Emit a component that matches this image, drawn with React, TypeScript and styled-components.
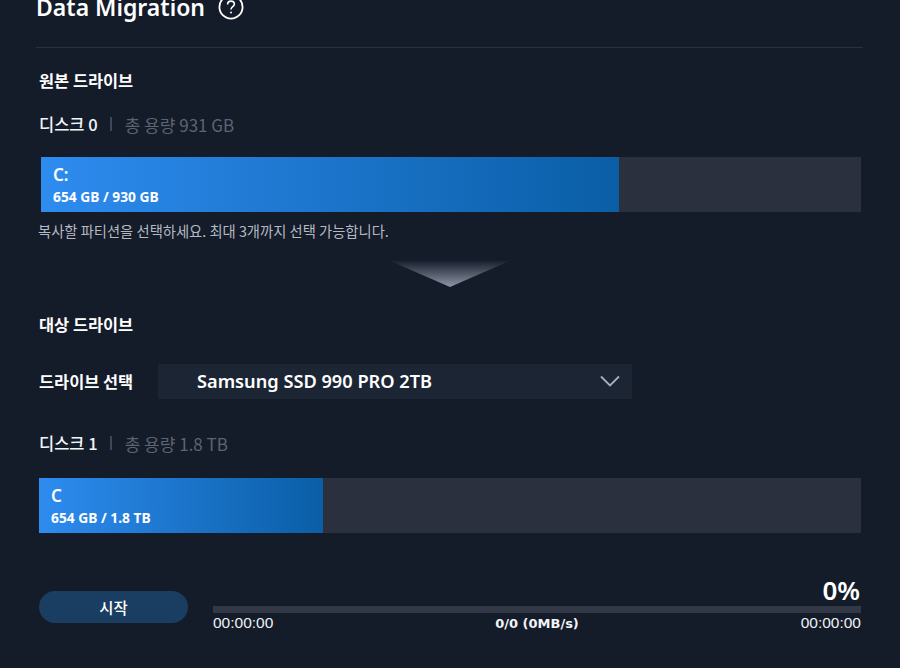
import { FC } from "react"
import styled, { createGlobalStyle } from "styled-components"

const GlobalStyle = createGlobalStyle`
    html, body {
        margin: 0;
        padding: 0;
        background: #141b29;
    }
    body {
        font-family: "Noto Sans", "Noto Sans CJK KR", sans-serif;
    }
`

const KR = `"Noto Sans CJK KR", "Noto Sans", sans-serif`

const Page = styled.div`
    width: 900px;
    height: 668px;
    overflow: hidden;
    background: #141b29;
    color: #fff;
    box-sizing: border-box;
    padding: 0 37px 0 36px;
`

const Header = styled.div`
    display: flex;
    align-items: center;
    gap: 13px;
    height: 36px;
    margin-top: -11px;
    padding-bottom: 22px;
    border-bottom: 1px solid #2a3140;
`

const Title = styled.h1`
    margin: 0;
    font-size: 23px;
    line-height: 34px;
    font-weight: 600;
    color: #fff;
`

const SectionTitle = styled.h2<{ $top: number }>`
    margin: ${(p) => p.$top}px 0 0 3px;
    font-family: ${KR};
    font-size: 16.4px;
    line-height: 22px;
    font-weight: 700;
`

const DiskRow = styled.div<{ $top: number }>`
    display: flex;
    align-items: center;
    margin: ${(p) => p.$top}px 0 0 3px;
    height: 22px;
    font-family: ${KR};
    font-size: 16.5px;
`

const DiskName = styled.span`
    font-weight: 500;
    color: #f2f4f7;
`

const Sep = styled.span`
    width: 2px;
    height: 14px;
    margin: 0 13px 0 12px;
    background: #3f4655;
`

const Capacity = styled.span`
    color: #5c6473;
    font-size: 17px;
    font-weight: 400;
`

const Bar = styled.div<{ $left: number; $top: number }>`
    display: flex;
    height: 55px;
    margin: ${(p) => p.$top}px 2px 0 ${(p) => p.$left}px;
    background: #2b303e;
`

const Fill = styled.div<{ $width: number }>`
    width: ${(p) => p.$width}px;
    box-sizing: border-box;
    padding: 8px 12px 0;
    background: linear-gradient(90deg, #2e8cf0 0%, #0a5ea6 100%);
`

const FillName = styled.div`
    font-size: 17px;
    line-height: 20px;
    font-weight: 600;
`

const FillSize = styled.div`
    margin-top: 3px;
    font-size: 13.8px;
    line-height: 18px;
    font-weight: 700;
`

const Help = styled.p`
    margin: 10px 0 0 2px;
    font-family: ${KR};
    font-size: 14.3px;
    line-height: 18px;
    color: #b4b9c2;
`

const ArrowWrap = styled.div`
    display: flex;
    justify-content: center;
    margin: 20px 0 0 0;
    height: 27px;
`

const SelectRow = styled.div`
    display: flex;
    align-items: center;
    margin: 29px 0 0 3px;
`

const SelectLabel = styled.span`
    width: 119px;
    padding-bottom: 2px;
    font-family: ${KR};
    font-size: 16.4px;
    font-weight: 700;
`

const Select = styled.div`
    display: flex;
    align-items: center;
    justify-content: space-between;
    width: 474px;
    height: 35px;
    box-sizing: border-box;
    padding: 0 12px 2px 39px;
    background: #1c2534;
    font-size: 18.2px;
    font-weight: 600;
`

const Footer = styled.div`
    display: flex;
    margin: 44px 2px 0 3px;
`

const StartButton = styled.button`
    flex: none;
    width: 149px;
    height: 32px;
    margin-top: 14px;
    border: 0;
    border-radius: 16px;
    background: #1a3e62;
    color: #fff;
    font-family: ${KR};
    font-size: 15.5px;
    font-weight: 500;
`

const Progress = styled.div`
    flex: 1;
    margin-left: 25px;
`

const Percent = styled.div`
    height: 29px;
    text-align: right;
    font-size: 26px;
    line-height: 26px;
    font-weight: 600;
    padding-right: 1px;
`

const Track = styled.div`
    height: 7px;
    background: #333846;
`

const Stats = styled.div`
    display: grid;
    grid-template-columns: 1fr auto 1fr;
    align-items: center;
    height: 20px;
`

const Time = styled.span<{ $end?: boolean }>`
    font-family: "Liberation Sans", sans-serif;
    font-size: 15.5px;
    color: #eef0f3;
    text-align: ${(p) => (p.$end ? "right" : "left")};
`

const Count = styled.span`
    padding-top: 1px;
    font-family: "DejaVu Sans", sans-serif;
    font-size: 13px;
    font-weight: 700;
    color: #f2f4f7;
`

const HelpIcon: FC = () => (
    <svg width="26" height="26" viewBox="0 0 26 26" fill="none">
        <circle cx="13" cy="13" r="11.6" stroke="#fff" strokeWidth="1.8" />
        <path d="M9.6 10.4c0-2 1.5-3.3 3.4-3.3s3.4 1.2 3.4 3c0 2.6-3.4 2.7-3.4 5.4" stroke="#fff" strokeWidth="1.6" />
        <circle cx="13" cy="18.6" r="1" fill="#fff" />
    </svg>
)

const DownArrow: FC = () => (
    <svg width="124" height="27" viewBox="0 0 124 27">
        <defs>
            <linearGradient id="arrowFade" x1="0" y1="0" x2="0" y2="1">
                <stop offset="0" stopColor="#141b29" />
                <stop offset="1" stopColor="#8e96a8" />
            </linearGradient>
        </defs>
        <path d="M0 0H124L62 27Z" fill="url(#arrowFade)" />
    </svg>
)

const Chevron: FC = () => (
    <svg width="20" height="12" viewBox="0 0 20 12" fill="none">
        <path d="M1 1.5l9 9 9-9" stroke="#a9b0bc" strokeWidth="1.8" />
    </svg>
)

export default function App() {
    return (
        <Page>
            <GlobalStyle />
            <Header>
                <Title>Data Migration</Title>
                <HelpIcon />
            </Header>

            <SectionTitle $top={21}>원본 드라이브</SectionTitle>
            <DiskRow $top={22}>
                <DiskName>디스크 0</DiskName>
                <Sep />
                <Capacity>총 용량 931 GB</Capacity>
            </DiskRow>
            <Bar $left={5} $top={22}>
                <Fill $width={578}>
                    <FillName>C:</FillName>
                    <FillSize>654 GB / 930 GB</FillSize>
                </Fill>
            </Bar>
            <Help>복사할 파티션을 선택하세요. 최대 3개까지 선택 가능합니다.</Help>
            <ArrowWrap>
                <DownArrow />
            </ArrowWrap>

            <SectionTitle $top={26}>대상 드라이브</SectionTitle>
            <SelectRow>
                <SelectLabel>드라이브 선택</SelectLabel>
                <Select>
                    Samsung SSD 990 PRO 2TB
                    <Chevron />
                </Select>
            </SelectRow>
            <DiskRow $top={33}>
                <DiskName>디스크 1</DiskName>
                <Sep />
                <Capacity>총 용량 1.8 TB</Capacity>
            </DiskRow>
            <Bar $left={3} $top={24}>
                <Fill $width={284}>
                    <FillName>C</FillName>
                    <FillSize>654 GB / 1.8 TB</FillSize>
                </Fill>
            </Bar>

            <Footer>
                <StartButton>시작</StartButton>
                <Progress>
                    <Percent>0%</Percent>
                    <Track />
                    <Stats>
                        <Time>00:00:00</Time>
                        <Count>0/0 (0MB/s)</Count>
                        <Time $end>00:00:00</Time>
                    </Stats>
                </Progress>
            </Footer>
        </Page>
    )
}
